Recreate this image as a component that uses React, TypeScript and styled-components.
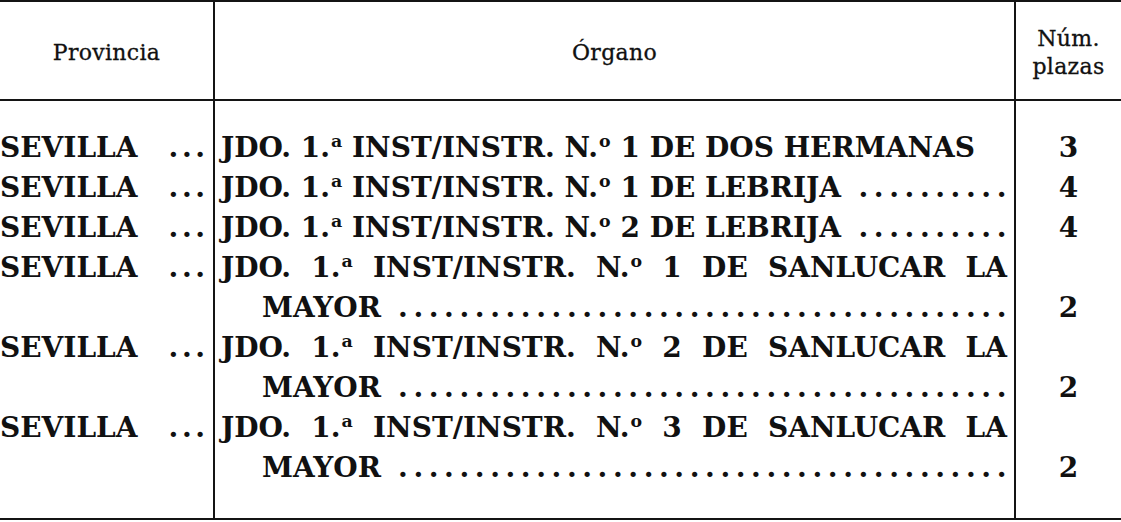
import React from 'react'
import styled, { createGlobalStyle } from 'styled-components'

const GlobalStyle = createGlobalStyle`
    html, body {
        margin: 0;
        padding: 0;
        background: #ffffff;
    }
`

type Entry = {
    provincia: string;
    numero: number;
    rest: string;
    extra?: string;
    leader: boolean;
    plazas: number;
}

const entries: Entry[] = [
    { provincia: 'SEVILLA', numero: 1, rest: 'DE DOS HERMANAS', leader: false, plazas: 3 },
    { provincia: 'SEVILLA', numero: 1, rest: 'DE LEBRIJA', leader: true, plazas: 4 },
    { provincia: 'SEVILLA', numero: 2, rest: 'DE LEBRIJA', leader: true, plazas: 4 },
    { provincia: 'SEVILLA', numero: 1, rest: 'DE SANLUCAR LA', extra: 'MAYOR', leader: true, plazas: 2 },
    { provincia: 'SEVILLA', numero: 2, rest: 'DE SANLUCAR LA', extra: 'MAYOR', leader: true, plazas: 2 },
    { provincia: 'SEVILLA', numero: 3, rest: 'DE SANLUCAR LA', extra: 'MAYOR', leader: true, plazas: 2 },
]

const Table = styled.table`
    width: 1121px;
    table-layout: fixed;
    border-collapse: separate;
    border-spacing: 0;
    border-top: 2px solid #141414;
    border-bottom: 2px solid #141414;
    color: #111111;

    th, td {
        box-sizing: border-box;
        padding: 0;
    }
`

const HeadCell = styled.th<{ $w: number; $divider?: boolean }>`
    width: ${p => p.$w}px;
    height: 99px;
    border-bottom: 2px solid #141414;
    border-left: ${p => (p.$divider ? '2px solid #141414' : 'none')};
    font-family: "DejaVu Serif", serif;
    font-weight: normal;
    font-size: 22px;
    line-height: 28px;
    letter-spacing: 0.3px;
    text-align: center;
    vertical-align: middle;
    padding-top: 4px !important;
    -webkit-text-stroke: 0.3px #111111;
`

const Cell = styled.td<{ $kind: 'prov' | 'org' | 'num'; $first: boolean; $last: boolean }>`
    font-family: "DejaVu Serif", serif;
    font-weight: bold;
    font-size: 28px;
    line-height: 40px;
    vertical-align: ${p => (p.$kind === 'num' ? 'bottom' : 'top')};
    border-left: ${p => (p.$kind === 'prov' ? 'none' : '2px solid #141414')};
    padding-top: ${p => (p.$first ? '27px' : '0')} !important;
    padding-bottom: ${p => (p.$last ? '30px' : '0')} !important;
    padding-left: ${p => (p.$kind === 'org' ? '6px' : '0')} !important;
    padding-right: ${p => (p.$kind === 'prov' ? '8px' : p.$kind === 'org' ? '7px' : '0')} !important;
    text-align: ${p => (p.$kind === 'num' ? 'center' : 'left')};
`

const ProvLine = styled.div`
    display: flex;
    justify-content: space-between;
    white-space: nowrap;
`

const ProvDots = styled.span`
    letter-spacing: 3.6px;
    margin-right: -3.6px;
`

const Ord = styled.sup`
    font-size: 0.62em;
    line-height: 0;
    vertical-align: 0.55em;
    margin-left: 1px;
`

const JustLine = styled.div`
    text-align: justify;
    text-align-last: justify;
`

const LeaderLine = styled.div<{ $indent: boolean }>`
    display: flex;
    white-space: nowrap;
    padding-left: ${p => (p.$indent ? '41px' : '0')};
`

const Leader = styled.span`
    flex: 1;
    min-width: 0;
    overflow: hidden;
    direction: rtl;
    text-align: right;
    margin-left: 18px;
    margin-right: -5px;
    letter-spacing: 5.6px;
`

const Organo: React.FC<{ e: Entry }> = ({ e }) => {
    const head = (
        <>
            JDO. 1.<Ord>a</Ord> INST/INSTR. N.<Ord>o</Ord> {e.numero} {e.rest}
        </>
    )
    const dots = e.leader ? <Leader>{'.'.repeat(90)}</Leader> : null

    if (e.extra) {
        return (
            <>
                <JustLine>{head}</JustLine>
                <LeaderLine $indent>
                    <span>{e.extra}</span>
                    {dots}
                </LeaderLine>
            </>
        )
    }
    return (
        <LeaderLine $indent={false}>
            <span>{head}</span>
            {dots}
        </LeaderLine>
    )
}

const App: React.FC = () => {
    return (
        <>
            <GlobalStyle />
            <Table>
                <thead>
                    <tr>
                        <HeadCell $w={213}>Provincia</HeadCell>
                        <HeadCell $w={801} $divider>Órgano</HeadCell>
                        <HeadCell $w={107} $divider>Núm.<br />plazas</HeadCell>
                    </tr>
                </thead>
                <tbody>
                    {entries.map((e, i) => {
                        const first = i === 0
                        const last = i === entries.length - 1
                        return (
                            <tr key={i}>
                                <Cell $kind='prov' $first={first} $last={last}>
                                    <ProvLine>
                                        <span>{e.provincia}</span>
                                        <ProvDots>...</ProvDots>
                                    </ProvLine>
                                </Cell>
                                <Cell $kind='org' $first={first} $last={last}>
                                    <Organo e={e} />
                                </Cell>
                                <Cell $kind='num' $first={first} $last={last}>{e.plazas}</Cell>
                            </tr>
                        )
                    })}
                </tbody>
            </Table>
        </>
    )
}

export default App
